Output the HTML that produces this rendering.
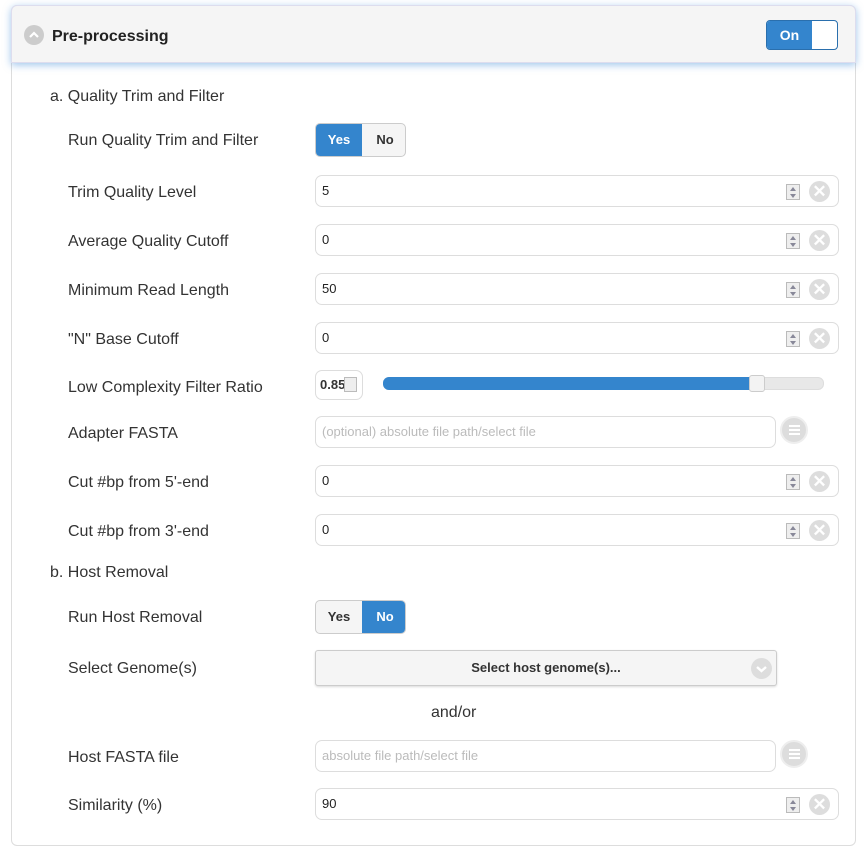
<!DOCTYPE html>
<html><head><style>
*{box-sizing:border-box;margin:0;padding:0}
body{width:864px;height:853px;background:#fff;font-family:"Liberation Sans",Arial,sans-serif;color:#333;position:relative;overflow:hidden}
.panel{position:absolute;left:11px;top:5px;width:845px;height:841px;border:1px solid #ddd;border-radius:6px}
.hdr{position:absolute;left:11px;top:5px;width:845px;height:58px;background:#f5f5f5;border:1px solid #dde;border-radius:6px 6px 0 0;box-shadow:0 2px 8px rgba(80,150,220,.55)}
.hdr .t{position:absolute;left:40px;top:22px;font-weight:bold;font-size:16px;color:#222}
.circ{position:absolute;left:12px;top:19px;width:20px;height:20px;border-radius:50%;background:#ccc}
.tog{position:absolute;left:754px;top:14px;width:72px;height:30px;border:1px solid #2a6fad;border-radius:4px;background:#fff;overflow:hidden}
.tog span{position:absolute;left:0;top:0;width:45px;height:28px;background:#3485cd;color:#fff;font-weight:bold;font-size:14px;text-align:center;line-height:28px}
.lbl{position:absolute;left:68px;font-size:16px;color:#333}
.sec{position:absolute;left:50px;font-size:16px;color:#333}
.inp{position:absolute;left:315px;width:524px;height:32px;border:1px solid #ddd;border-radius:7px;font-size:13px;line-height:30px;padding-left:6px;color:#222}
.inp .sp{position:absolute;right:38px;top:8px;width:14px;height:16px;border:1px solid #bbb;background:#eee}
.inp .sp:before{content:"";position:absolute;left:3px;top:2px;border:3px solid transparent;border-bottom:4px solid #889;border-top:0}
.inp .sp:after{content:"";position:absolute;left:3px;top:9px;border:3px solid transparent;border-top:4px solid #889;border-bottom:0}
.inp .x{position:absolute;right:8px;top:5px;width:21px;height:21px;border-radius:50%;background:#ddd;color:#fff;font-size:17px;line-height:21px;text-align:center;font-weight:bold}
.ph{color:#bbb}
.fb{position:absolute;left:780px;width:28px;height:28px;border-radius:50%;background:#ddd;border:2px solid #eee}
.fb i{position:absolute;left:7px;width:11px;height:2px;background:#fff}
.yn{position:absolute;left:315px;width:91px;height:34px;border:1px solid #ccc;border-radius:5px;overflow:hidden;background:#f5f5f5;font-weight:bold;font-size:13px}
.yn span{position:absolute;top:0;width:46px;height:34px;line-height:32px;text-align:center}
.on{background:#3485cd;color:#fff}
</style></head><body>
<div class="panel"></div>
<div class="hdr"><div class="circ"><svg width="20" height="20"><path d="M6 12 L10 8 L14 12" stroke="#fff" stroke-width="2.2" fill="none"/></svg></div><div class="t">Pre-processing</div><div class="tog"><span>On</span></div></div>

<div class="sec" style="top:88px">a. Quality Trim and Filter</div>
<div class="lbl" style="top:132px">Run Quality Trim and Filter</div>
<div class="yn" style="top:123px"><span class="on" style="left:0">Yes</span><span style="left:46px">No</span></div>

<div class="lbl" style="top:184px">Trim Quality Level</div>
<div class="inp" style="top:175px">5<div class="sp"></div><div class="x">✕</div></div>
<div class="lbl" style="top:233px">Average Quality Cutoff</div>
<div class="inp" style="top:224px">0<div class="sp"></div><div class="x">✕</div></div>
<div class="lbl" style="top:282px">Minimum Read Length</div>
<div class="inp" style="top:273px">50<div class="sp"></div><div class="x">✕</div></div>
<div class="lbl" style="top:331px">"N" Base Cutoff</div>
<div class="inp" style="top:322px">0<div class="sp"></div><div class="x">✕</div></div>

<div class="lbl" style="top:379px">Low Complexity Filter Ratio</div>
<div style="position:absolute;left:315px;top:370px;width:48px;height:30px;border:1px solid #ddd;border-radius:7px;font-size:13px;font-weight:bold;line-height:28px;padding-left:4px">0.85</div>
<div style="position:absolute;left:344px;top:377px;width:13px;height:15px;border:1px solid #bbb;background:#eee"></div>
<div style="position:absolute;left:383px;top:377px;width:441px;height:13px;border-radius:6px;background:#e8e8e8;border:1px solid #ddd"></div>
<div style="position:absolute;left:383px;top:377px;width:375px;height:13px;border-radius:6px 0 0 6px;background:#3485cd"></div>
<div style="position:absolute;left:749px;top:375px;width:16px;height:17px;border-radius:3px;background:#f3f3f3;border:1px solid #ccc"></div>

<div class="lbl" style="top:425px">Adapter FASTA</div>
<div class="inp ph" style="top:416px;width:461px">(optional) absolute file path/select file</div>
<div class="fb" style="top:416px"><i style="top:7px"></i><i style="top:11px"></i><i style="top:15px"></i></div>

<div class="lbl" style="top:474px">Cut #bp from 5'-end</div>
<div class="inp" style="top:465px">0<div class="sp"></div><div class="x">✕</div></div>
<div class="lbl" style="top:523px">Cut #bp from 3'-end</div>
<div class="inp" style="top:514px">0<div class="sp"></div><div class="x">✕</div></div>

<div class="sec" style="top:564px">b. Host Removal</div>
<div class="lbl" style="top:609px">Run Host Removal</div>
<div class="yn" style="top:600px"><span style="left:0">Yes</span><span class="on" style="left:46px">No</span></div>

<div class="lbl" style="top:660px">Select Genome(s)</div>
<div style="position:absolute;left:315px;top:650px;width:462px;height:36px;border:1px solid #ccc;border-radius:3px;background:#f5f5f5;box-shadow:0 1px 2px rgba(0,0,0,.15);text-align:center;font-weight:bold;font-size:13px;line-height:34px">Select host genome(s)...<div style="position:absolute;right:4px;top:7px;width:21px;height:21px;border-radius:50%;background:#ddd"><svg width="21" height="21" style="position:absolute;left:0;top:0"><path d="M6 9 L10.5 13 L15 9" stroke="#fff" stroke-width="2.4" fill="none"/></svg></div></div>

<div style="position:absolute;left:431px;top:704px;font-size:16px">and/or</div>

<div class="lbl" style="top:749px">Host FASTA file</div>
<div class="inp ph" style="top:740px;width:461px">absolute file path/select file</div>
<div class="fb" style="top:740px"><i style="top:7px"></i><i style="top:11px"></i><i style="top:15px"></i></div>

<div class="lbl" style="top:797px">Similarity (%)</div>
<div class="inp" style="top:788px">90<div class="sp"></div><div class="x">✕</div></div>
</body></html>
